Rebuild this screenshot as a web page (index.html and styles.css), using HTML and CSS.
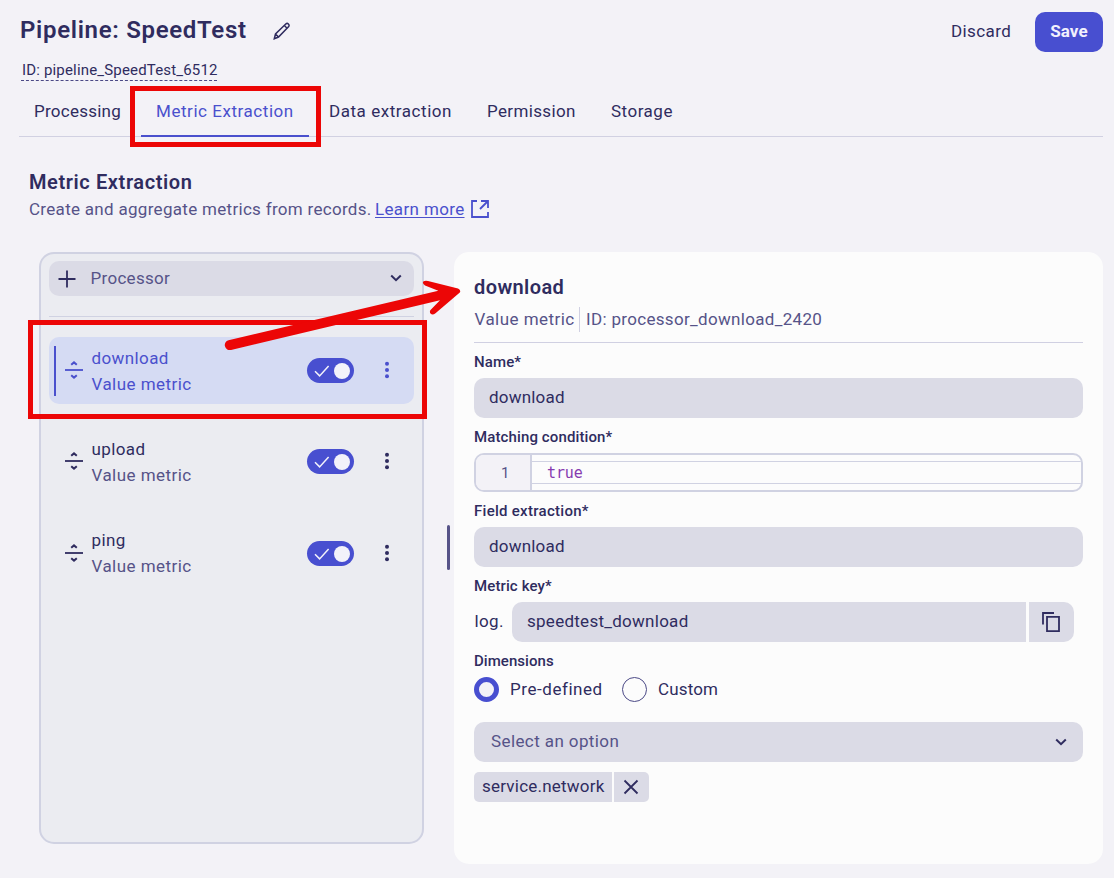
FILE: index.html
```html
<!DOCTYPE html>
<html lang="en">
<head>
<meta charset="utf-8">
<title>Pipeline: SpeedTest</title>
<link rel="stylesheet" href="styles.css">
</head>
<body>
<svg width="0" height="0" class="defs" aria-hidden="true">
  <symbol id="drag" viewBox="0 0 20 20"><path d="M1 10h18" stroke-width="1.8"/><path d="M7.2 4.8 10 2.4l2.8 2.4M7.2 15.2l2.8 2.4 2.8-2.4" stroke-width="2"/></symbol>
  <symbol id="check" viewBox="0 0 16 12"><path d="M1 6.3l4.6 4.6L14.6 1" stroke-width="1.5"/></symbol>
  <symbol id="dots" viewBox="0 0 6 18"><circle cx="3" cy="2.7" r="2"/><circle cx="3" cy="9" r="2"/><circle cx="3" cy="15.3" r="2"/></symbol>
  <symbol id="chevron" viewBox="0 0 12 8"><path d="M1.2 1.5 6 6.2l4.8-4.7" stroke-width="2"/></symbol>
</svg>
<div class="page">
  <header class="header">
    <h1 class="title">Pipeline: SpeedTest</h1>
    <svg class="pencil" viewBox="0 0 18 18"><path d="M1.3 16.7 2.5 12 13 1.8Q14.2.9 15.4 2t.3 2.6L5.5 15zM11.3 3.5l2.8 2.8M2.500 12l3 3"/></svg>
    <span class="discard">Discard</span>
    <button class="save">Save</button>
  </header>
  <div class="pipeline-id">ID: pipeline_SpeedTest_6512</div>
  <nav class="tabs">
    <a class="tab tab-processing">Processing</a>
    <a class="tab tab-metric active">Metric Extraction</a>
    <a class="tab tab-data">Data extraction</a>
    <a class="tab tab-permission">Permission</a>
    <a class="tab tab-storage">Storage</a>
  </nav>
  <section class="intro">
    <h2 class="heading">Metric Extraction</h2>
    <p class="desc"><span>Create and aggregate metrics from records.</span><a class="learn">Learn more</a>
      <svg class="external" viewBox="0 0 20 20"><path d="M7 2H2v16h16v-5M11 2h7v7M18 2l-8 8"/></svg></p>
  </section>
  <main class="columns">
    <aside class="list">
      <div class="add">
        <svg class="plus" viewBox="0 0 18 18"><path d="M9 .5v17M.5 9h17"/></svg>
        <span class="add-label">Processor</span>
        <svg class="chevron"><use href="#chevron"/></svg>
      </div>
      <div class="item selected">
        <svg class="drag"><use href="#drag"/></svg>
        <div class="item-text"><div class="item-name">download</div><div class="item-kind">Value metric</div></div>
        <span class="toggle"><svg class="check"><use href="#check"/></svg><i class="knob"></i></span>
        <svg class="dots"><use href="#dots"/></svg>
      </div>
      <div class="item">
        <svg class="drag"><use href="#drag"/></svg>
        <div class="item-text"><div class="item-name">upload</div><div class="item-kind">Value metric</div></div>
        <span class="toggle"><svg class="check"><use href="#check"/></svg><i class="knob"></i></span>
        <svg class="dots"><use href="#dots"/></svg>
      </div>
      <div class="item last">
        <svg class="drag"><use href="#drag"/></svg>
        <div class="item-text"><div class="item-name">ping</div><div class="item-kind">Value metric</div></div>
        <span class="toggle"><svg class="check"><use href="#check"/></svg><i class="knob"></i></span>
        <svg class="dots"><use href="#dots"/></svg>
      </div>
    </aside>
    <div class="resizer"></div>
    <section class="detail">
      <h2 class="detail-title">download</h2>
      <div class="meta"><span class="meta-kind">Value metric</span><span class="meta-id">ID: processor_download_2420</span></div>
      <div class="label">Name*</div>
      <div class="field">download</div>
      <div class="label">Matching condition*</div>
      <div class="editor"><div class="gutter">1</div><div class="code"><div class="code-line">true</div></div></div>
      <div class="label label-field">Field extraction*</div>
      <div class="field">download</div>
      <div class="label">Metric key*</div>
      <div class="key-row">
        <span class="prefix">log.</span>
        <div class="field key">speedtest_download</div>
        <div class="copy"><svg class="copy-icon" viewBox="0 0 20 22"><path d="M2 13.5V2h11M6 5.8h12v14.4H6z"/></svg></div>
      </div>
      <div class="label label-dim">Dimensions</div>
      <div class="radios">
        <i class="radio on"></i><span class="radio-pre">Pre-defined</span>
        <i class="radio"></i><span class="radio-custom">Custom</span>
      </div>
      <div class="select"><span class="placeholder">Select an option</span><svg class="chevron"><use href="#chevron"/></svg></div>
      <div class="chip"><span class="chip-text">service.network</span><span class="chip-x"><svg class="cross" viewBox="0 0 16 16"><path d="M1.5 1.5l13 13M14.5 1.5l-13 13"/></svg></span></div>
    </section>
  </main>
</div>
<div class="mark mark-tab"></div>
<div class="mark mark-item"></div>
<svg class="arrow" viewBox="215 270 260 90"><path d="M228.500 340.300 438.300 290.700 425 285.400Q422 283.500 423.300 281.500Q425 280.300 428 281L458 288.600Q461.300 290.500 459.800 292.500L435.500 313.300Q432.500 315.600 430.500 313.500Q429.300 311.500 430.500 310L440 300.300 231 349.900A4.900 4.900 0 0 1 228.500 340.300z"/></svg>
</body>
</html>
```
FILE: styles.css
```css
* { box-sizing: border-box; }
body {
  margin: 0;
  width: 1114px;
  height: 878px;
  overflow: hidden;
  background: #f3f2f7;
  color: #2f2c5f;
  font: 400 17px/26px Roboto, "Liberation Sans", sans-serif;
  letter-spacing: .35px;
}
h1, h2, p { margin: 0; }
svg { fill: none; stroke: currentColor; flex: none; }
.defs { position: absolute; }
.page { padding: 12px 11px 0 19px; }
.header { display: flex; align-items: flex-start; height: 48px; }
.title { width: 254px; padding-left: 1px; font-size: 24px; line-height: 36px; font-weight: 600; letter-spacing: .68px; white-space: nowrap; }
.pencil { width: 18px; height: 18px; margin-top: 10px; stroke-width: 1.5; }
.discard { margin-left: auto; width: 84px; line-height: 39px; font-weight: 450; letter-spacing: .4px; }
.save { width: 68px; height: 40px; padding: 0 0 2px; border: 0; border-radius: 10px; background: #484fd0; color: #f1f1fd; font: inherit; font-weight: 700; letter-spacing: .1px; line-height: 38px; }
.pipeline-id { width: 196px; height: 21px; margin-left: 2px; padding-left: 1px; border-bottom: 1px dashed #4b4986; font-size: 15px; line-height: 20px; letter-spacing: .17px; white-space: nowrap; }
.tabs { display: flex; gap: 5px; height: 51px; margin-top: 5px; border-bottom: 1px solid #d1d1e2; }
.tab { height: 51px; padding-left: 15px; line-height: 51px; font-weight: 450; letter-spacing: .35px; white-space: nowrap; }
.tab-processing { width: 117px; letter-spacing: .25px; }
.tab-metric { width: 168px; letter-spacing: .55px; }
.tab-data { width: 153px; letter-spacing: .55px; }
.tab-permission { width: 119px; }
.tab-storage { width: 94px; letter-spacing: .5px; }
.active { color: #4a50cd; border-bottom: 2px solid #4a50cd; }
.intro { padding: 32px 0 30px 10px; }
.heading, .detail-title { font-size: 20px; line-height: 26px; font-weight: 600; letter-spacing: .6px; }
.desc { display: flex; margin-top: 1px; color: #565388; }
.desc span { width: 346px; letter-spacing: .3px; white-space: nowrap; }
.learn { color: #4a50cd; width: 90px; white-space: nowrap; text-decoration: underline; text-underline-offset: 2px; text-decoration-thickness: 1px; }
.external { width: 20px; height: 20px; margin: 3px 0 0 4.500px; color: #4a50cd; stroke-width: 1.8; }
.columns { display: flex; align-items: flex-start; padding-left: 20px; }
.list { width: 385px; height: 592px; padding: 7px 8px; border: 2px solid #d0d2e2; border-radius: 15px; background: #ebecf1; }
.add { display: flex; align-items: center; height: 35px; padding: 0 12px 0 8.500px; border-radius: 10px; background: #dbdbe6; }
.plus { width: 18px; height: 18px; stroke-width: 1.8; }
.add-label { flex: 1; margin: -1px 0 0 15px; color: #565388; font-weight: 450; letter-spacing: .3px; }
.chevron { width: 12px; height: 8px; margin-top: -1px; }
.item { position: relative; display: flex; align-items: center; height: 67px; margin-top: 24px; padding-left: 14.500px; border-radius: 10px; color: #2f2c5f; }
.item.selected { margin-top: 41px; background: #d5dbf3; color: #4a50cd; }
.item.selected::before { content: ""; position: absolute; left: 5px; top: 9px; width: 2px; height: 50px; background: #4a50cd; }
.item.selected::after { content: ""; position: absolute; left: 0; top: -21px; width: 365px; height: 1px; background: #d0d2e2; }
.item.last { margin-top: 25px; }
.drag { width: 20px; height: 20px; margin-top: -1px; }
.item-text { width: 215.500px; margin: 1px 0 0 8px; }
.item.last .item-text { margin-top: -1px; }
.item-name { font-weight: 450; letter-spacing: .4px; }
.item-kind { color: #565388; letter-spacing: .45px; }
.selected .item-kind { color: #4a50cd; }
.toggle { display: flex; align-items: center; width: 47px; height: 25px; padding-left: 7px; border-radius: 13px; background: #484fd0; color: #f3f2fa; }
.check { width: 16px; height: 12px; }
.knob { width: 16px; height: 16px; margin-left: 4px; border-radius: 50%; background: #f3f2fa; }
.dots { width: 6px; height: 18px; margin: -1px 0 0 29.500px; fill: currentColor; stroke: none; }
.resizer { width: 3px; height: 45px; margin: 273px 4px 0 23px; border-radius: 2px; background: #565388; }
.detail { width: 649px; height: 612px; padding: 22px 20px; border-radius: 15px; background: #fcfcfc; }
.meta { display: flex; height: 47px; padding-top: 11px; border-bottom: 1px solid #d0d0e2; color: #565388; line-height: 25px; }
.detail-title { letter-spacing: .4px; margin-bottom: -4px; }
.meta-kind { width: 106px; height: 25px; padding-left: .5px; border-right: 1px solid #d0d0e2; letter-spacing: .45px; }
.meta-id { margin-left: 6px; letter-spacing: .32px; }
.label { margin: 9px 0 6px; font-size: 15px; line-height: 20px; font-weight: 500; letter-spacing: .12px; }
.label-field { letter-spacing: .28px; }
.label-dim { letter-spacing: .05px; }
.field { height: 40px; padding-left: 15px; border-radius: 10px; background: #dbdbe6; line-height: 39px; letter-spacing: .2px; }
.editor { display: flex; height: 39px; border: 2px solid #d0d2e2; border-radius: 10px; overflow: hidden; }
.gutter { width: 56px; border-right: 2px solid #d0d2e2; background: #f3f2f7; font: 15px/36px Roboto, sans-serif; text-align: center; padding-left: 5px; color: #565388; }
.code { flex: 1; padding: 6px 0; }
.code-line { height: 23px; padding-left: 15px; border: solid #d0d2e2; border-width: 1px 0; color: #863bb0; font: 15px/23px "DejaVu Sans Mono", monospace; letter-spacing: -.1px; }
.key-row { display: flex; line-height: 39px; }
.prefix { width: 38px; padding-left: .5px; }
.key { width: 514px; border-radius: 10px 0 0 10px; letter-spacing: .27px; }
.copy { display: flex; align-items: center; justify-content: center; width: 45px; height: 40px; margin-left: 3px; padding: 0 1px 1px 0; border-radius: 0 10px 10px 0; background: #dbdbe6; }
.copy-icon { width: 20px; height: 22px; stroke-width: 1.8; }
.radios { display: flex; align-items: center; height: 25px; margin-bottom: 20px; line-height: 24px; }
.radio { width: 25px; height: 25px; border: 1px solid #4b4986; border-radius: 50%; }
.radio.on { border: 5px solid #484fd0; background: #f3f2f7; }
.radio-pre { width: 112px; margin-left: 11px; letter-spacing: .55px; }
.radios span { margin-top: -1px; }
.radio-custom { margin-left: 11px; letter-spacing: .15px; }
.select { display: flex; align-items: center; justify-content: space-between; height: 40px; padding: 0 16px 0 17px; border-radius: 10px; background: #dbdbe6; color: #565388; font-weight: 450; line-height: 38px; }
.placeholder { padding-bottom: 2px; line-height: 36px; letter-spacing: .4px; }
.select .chevron { color: #2f2c5f; }
.chip { display: flex; gap: 2px; height: 30px; margin-top: 10px; line-height: 29px; }
.chip-text { width: 138px; padding-left: 8px; border-radius: 5px 0 0 5px; background: #dbdbe6; letter-spacing: .22px; }
.chip-x { display: flex; align-items: center; justify-content: center; width: 35px; padding: 0 1px 1px 0; border-radius: 0 5px 5px 0; background: #dbdbe6; }
.cross { width: 16px; height: 16px; stroke-width: 1.8; }
/* annotation marks laid over the interface */
.mark { position: absolute; border: 5px solid #ec0606; }
.mark-tab { left: 130px; top: 86px; width: 191px; height: 61px; }
.mark-item { left: 28px; top: 320px; width: 399px; height: 99px; }
.arrow { position: absolute; left: 215px; top: 270px; width: 260px; height: 90px; fill: #ec0606; stroke: none; }
```
